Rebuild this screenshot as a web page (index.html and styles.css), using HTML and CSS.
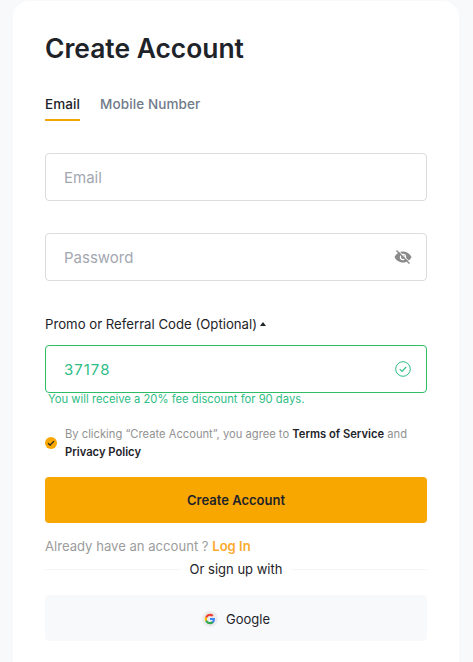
FILE: index.html
```html
<!DOCTYPE html>
<html lang="en">
<head>
<meta charset="utf-8">
<title>Create Account</title>
<link rel="stylesheet" href="styles.css">
</head>
<body>
<main class="card">
  <h1 class="title">Create Account</h1>
  <div class="tabs">
    <span class="tab tab-active">Email</span>
    <span class="tab">Mobile Number</span>
  </div>
  <div class="field field-first"><span class="placeholder">Email</span></div>
  <div class="field field-gap">
    <span class="placeholder">Password</span>
    <svg class="eye" viewBox="0 0 18 18" width="18" height="18">
      <path fill="#8a8a8a" d="M9 3.500c-3.800 0-7 2.300-8.500 5.500C2 12.200 5.200 14.500 9 14.500s7-2.300 8.500-5.500C16 5.800 12.800 3.500 9 3.500zM9 12.200A3.200 3.200 0 1 1 9 5.800a3.200 3.200 0 0 1 0 6.400z"/>
      <circle cx="9" cy="9" r="2" fill="#8a8a8a"/>
      <path stroke="#8a8a8a" stroke-width="1.600" fill="none" d="M2.500 2.500l13 13"/>
      <path stroke="#fff" stroke-width="1" fill="none" d="M3.600 1.900l13 13"/>
    </svg>
  </div>
  <div class="label">Promo or Referral Code (Optional)<span class="caret"></span></div>
  <div class="field field-ok">
    <span class="value">37178</span>
    <svg class="ok" viewBox="0 0 16 16" width="16" height="16">
      <circle cx="8" cy="8" r="7.300" fill="none" stroke="#2ebd85" stroke-width="1"/>
      <path d="M4.800 8.200l2.200 2.200 4.200-4.400" fill="none" stroke="#2ebd85" stroke-width="1.100"/>
    </svg>
  </div>
  <p class="hint">You will receive a 20% fee discount for 90 days.</p>
  <div class="agree">
    <svg class="check" viewBox="0 0 12 12" width="12" height="12">
      <circle cx="6" cy="6" r="6" fill="#f8a600"/>
      <path d="M3 6.200l2.100 2 3.900-4.100" fill="none" stroke="#1e2329" stroke-width="1.200"/>
    </svg>
    <p class="agree-text">By clicking “Create Account”, you agree to <b class="strong">Terms of Service</b> and <b class="strong">Privacy Policy</b></p>
  </div>
  <button class="submit" type="button">Create Account</button>
  <p class="login">Already have an account ? <a class="login-link">Log In</a></p>
  <div class="divider"><span class="divider-text">Or sign up with</span></div>
  <button class="google" type="button">
    <svg class="g" viewBox="0 0 16 16" width="16" height="16">
      <circle cx="8" cy="8" r="8" fill="#ececec"/>
      <path d="M13 8.100c0-.4 0-.7-.1-1H8v2h2.800c-.1.600-.5 1.100-1 1.500v1.300h1.700c1-.9 1.500-2.200 1.500-3.800z" fill="#4285f4"/>
      <path d="M8 13.200c1.400 0 2.600-.5 3.500-1.300l-1.700-1.300c-.5.300-1.100.5-1.800.5-1.400 0-2.500-.9-2.900-2.200H3.300v1.300c.9 1.800 2.700 3 4.700 3z" fill="#34a853"/>
      <path d="M5.100 8.900c-.2-.6-.2-1.200 0-1.800V5.800H3.300c-.7 1.400-.7 3 0 4.400z" fill="#fbbc05"/>
      <path d="M8 4.900c.8 0 1.500.3 2 .8l1.500-1.500C10.600 3.300 9.400 2.800 8 2.800c-2 0-3.800 1.200-4.700 3l1.800 1.300C5.500 5.800 6.600 4.900 8 4.900z" fill="#ea4335"/>
    </svg>
    <span>Google</span>
  </button>
</main>
</body>
</html>
```

FILE: styles.css
```css
* { box-sizing: border-box; }
html, body { margin: 0; height: 100%; }
body {
  background: #f8f9fb;
  padding: 1px 14px 0 13px;
  overflow: hidden;
  font-family: Inter, "Liberation Sans", sans-serif;
  color: #1e2329;
}
.card {
  background: #fff;
  border-radius: 16px 16px 0 0;
  padding: 29px 32px 21px;
}
.title {
  margin: 0;
  font-size: 26.400px;
  line-height: 36px;
  font-weight: 600;
}
.tabs { display: flex; gap: 20px; margin-top: 20px; height: 35px; }
.tab {
  font-size: 13.500px;
  letter-spacing: 0.1px;
  line-height: 36px;
  height: 35px;
  font-weight: 500;
  color: #707a8a;
}
.tab-active { color: #1e2329; border-bottom: 2px solid #f0a500; }
.field {
  height: 48px;
  border: 1px solid #dcdcdc;
  border-radius: 4px;
  padding: 0 14px 0 18px;
  display: flex;
  align-items: center;
  justify-content: space-between;
  font-size: 15px;
}
.field-first { margin-top: 32px; }
.field-gap { margin-top: 32px; }
.placeholder { color: #a3a7b0; }
.eye { display: block; }
.label {
  margin-top: 32px;
  margin-bottom: 10px;
  font-size: 13.200px;
  line-height: 22px;
  height: 22px;
  display: flex;
  align-items: center;
}
.caret {
  margin-left: 3px;
  width: 0;
  height: 0;
  border-left: 3.500px solid transparent;
  border-right: 3.500px solid transparent;
  border-bottom: 4px solid #1e2329;
}
.field-ok { border-color: #2ebd65; padding-right: 15px; }
.value { color: #2ebd85; letter-spacing: 1px; }
.ok { display: block; }
.hint {
  margin: 1px 0 0;
  padding-left: 3px;
  font-size: 11.250px;
  line-height: 11px;
  color: #2ebd85;
}
.agree { display: flex; align-items: center; gap: 8px; margin-top: 20px; }
.check { flex: none; }
.agree-text {
  margin: 0;
  font-size: 11.200px;
  line-height: 18px;
  color: #929292;
  flex: 1;
}
.strong { font-weight: 600; color: #1e2329; }
.submit {
  display: block;
  width: 100%;
  height: 46px;
  margin-top: 16px;
  border: 0;
  border-radius: 4px;
  background: #f8a600;
  color: #1e2329;
  font: 600 13px Inter, sans-serif;
}
.login {
  margin: 14px 0 0;
  font-size: 13.100px;
  line-height: 18px;
  color: #9c9c9c;
}
.login-link { color: #fbab2e; font-weight: 600; }
.divider {
  display: flex;
  align-items: center;
  justify-content: center;
  height: 18px;
  margin-top: 5px;
  font-size: 13px;
}
.divider::before, .divider::after {
  content: "";
  flex: 1;
  border-top: 1px solid #f5f5f5;
}
.divider-text { padding: 0 9px; }
.google {
  width: 100%;
  height: 46px;
  margin-top: 17px;
  padding: 2px 0 0;
  border: 0;
  border-radius: 4px;
  background: #f8f9fb;
  color: #1e2329;
  display: flex;
  align-items: center;
  justify-content: center;
  gap: 8px;
  font: 400 13px Inter, sans-serif;
}
.g { display: block; }
```
